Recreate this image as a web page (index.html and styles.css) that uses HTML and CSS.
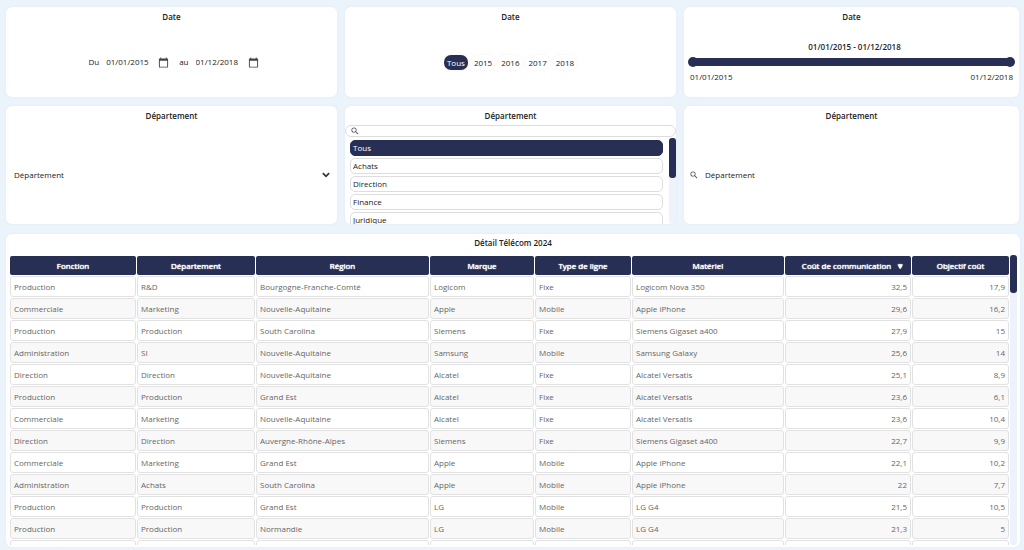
FILE: index.html
```html
<!DOCTYPE html>
<html lang="fr">
<head>
<meta charset="utf-8">
<title>Détail Télécom 2024</title>
<link rel="stylesheet" href="styles.css">
</head>
<body>
<svg class="sprite" aria-hidden="true">
  <symbol id="search" viewBox="2 2 20 20"><path fill="currentColor" d="M15.5 14h-.79l-.28-.27A6.47 6.47 0 0 0 16 9.5 6.5 6.5 0 1 0 9.5 16c1.61 0 3.09-.59 4.23-1.57l.27.28v.79l5 4.99L20.49 19l-4.99-5zm-6 0C7.01 14 5 11.99 5 9.5S7.01 5 9.5 5 14 7.01 14 9.5 11.99 14 9.5 14z"/></symbol>
  <symbol id="calendar" viewBox="0 0 24 24"><path fill="currentColor" d="M20 3h-1V1h-2v2H7V1H5v2H4c-1.100 0-2 .9-2 2v16c0 1.100.9 2 2 2h16c1.100 0 2-.9 2-2V5c0-1.100-.9-2-2-2zm0 18H4V8h16v13z"/></symbol>
</svg>
<main class="dashboard">
  <section class="filters">
    <article class="card">
      <h2 class="title">Date</h2>
      <div class="body period">
        <label for="from">Du</label>
        <input class="date" id="from" type="text" value="01/01/2015">
        <button class="icon-button" type="button" aria-label="Choisir la date de début"><svg class="cal"><use href="#calendar"/></svg></button>
        <label class="until" for="to">au</label>
        <input class="date" id="to" type="text" value="01/12/2018">
        <button class="icon-button" type="button" aria-label="Choisir la date de fin"><svg class="cal"><use href="#calendar"/></svg></button>
      </div>
    </article>
    <article class="card">
      <h2 class="title">Date</h2>
      <div class="body years">
        <button class="pill selected" type="button">Tous</button>
        <button class="pill" type="button">2015</button>
        <button class="pill" type="button">2016</button>
        <button class="pill" type="button">2017</button>
        <button class="pill" type="button">2018</button>
      </div>
    </article>
    <article class="card">
      <h2 class="title">Date</h2>
      <div class="body range">
        <strong class="range-value">01/01/2015 - 01/12/2018</strong>
        <div class="slider">
          <span class="track"></span>
          <input type="range" min="0" max="47" value="0" aria-label="Date de début">
          <input type="range" min="0" max="47" value="47" aria-label="Date de fin">
        </div>
        <div class="bounds"><span>01/01/2015</span><span>01/12/2018</span></div>
      </div>
    </article>
    <article class="card">
      <h2 class="title">Département</h2>
      <div class="body dropdown">
        <select class="select" aria-label="Département"><option>Département</option></select>
        <svg class="chevron" viewBox="0 0 8 8" aria-hidden="true"><path d="M1.500 2.500 4 5l2.500-2.500" fill="none" stroke="currentColor" stroke-width="1.400"/></svg>
      </div>
    </article>
    <article class="card">
      <h2 class="title">Département</h2>
      <div class="searchbar">
        <svg class="glass"><use href="#search"/></svg>
        <input class="field" type="text" aria-label="Rechercher un département">
      </div>
      <div class="list">
        <ul class="options">
          <li><button class="option selected" type="button">Tous</button></li>
          <li><button class="option" type="button">Achats</button></li>
          <li><button class="option" type="button">Direction</button></li>
          <li><button class="option" type="button">Finance</button></li>
          <li><button class="option" type="button">Juridique</button></li>
        </ul>
        <div class="scroll"><div class="thumb"></div></div>
      </div>
    </article>
    <article class="card">
      <h2 class="title">Département</h2>
      <div class="body lookup">
        <svg class="glass"><use href="#search"/></svg>
        <input class="field" type="text" placeholder="Département" aria-label="Département">
      </div>
    </article>
  </section>
  <section class="card details">
    <h2 class="title">Détail Télécom 2024</h2>
    <div class="viewport">
      <div class="table-clip">
      <table class="table">
        <colgroup><col class="c-function"><col class="c-department"><col class="c-region"><col class="c-brand"><col class="c-line"><col class="c-device"><col class="c-cost"><col class="c-target"></colgroup>
        <thead><tr><th>Fonction</th><th>Département</th><th>Région</th><th>Marque</th><th>Type de ligne</th><th>Matériel</th><th class="sorted">Coût de communication <span class="sort">▼</span></th><th>Objectif coût</th></tr></thead>
        <tbody>
          <tr><td>Production</td><td>R&amp;D</td><td>Bourgogne-Franche-Comté</td><td>Logicom</td><td>Fixe</td><td>Logicom Nova 350</td><td>32,5</td><td>17,9</td></tr>
          <tr><td>Commerciale</td><td>Marketing</td><td>Nouvelle-Aquitaine</td><td>Apple</td><td>Mobile</td><td>Apple iPhone</td><td>29,6</td><td>16,2</td></tr>
          <tr><td>Production</td><td>Production</td><td>South Carolina</td><td>Siemens</td><td>Fixe</td><td>Siemens Gigaset a400</td><td>27,9</td><td>15</td></tr>
          <tr><td>Administration</td><td>SI</td><td>Nouvelle-Aquitaine</td><td>Samsung</td><td>Mobile</td><td>Samsung Galaxy</td><td>25,6</td><td>14</td></tr>
          <tr><td>Direction</td><td>Direction</td><td>Nouvelle-Aquitaine</td><td>Alcatel</td><td>Fixe</td><td>Alcatel Versatis</td><td>25,1</td><td>8,9</td></tr>
          <tr><td>Production</td><td>Production</td><td>Grand Est</td><td>Alcatel</td><td>Fixe</td><td>Alcatel Versatis</td><td>23,6</td><td>6,1</td></tr>
          <tr><td>Commerciale</td><td>Marketing</td><td>Nouvelle-Aquitaine</td><td>Alcatel</td><td>Fixe</td><td>Alcatel Versatis</td><td>23,6</td><td>10,4</td></tr>
          <tr><td>Direction</td><td>Direction</td><td>Auvergne-Rhône-Alpes</td><td>Siemens</td><td>Fixe</td><td>Siemens Gigaset a400</td><td>22,7</td><td>9,9</td></tr>
          <tr><td>Commerciale</td><td>Marketing</td><td>Grand Est</td><td>Apple</td><td>Mobile</td><td>Apple iPhone</td><td>22,1</td><td>10,2</td></tr>
          <tr><td>Administration</td><td>Achats</td><td>South Carolina</td><td>Apple</td><td>Mobile</td><td>Apple iPhone</td><td>22</td><td>7,7</td></tr>
          <tr><td>Production</td><td>Production</td><td>Grand Est</td><td>LG</td><td>Mobile</td><td>LG G4</td><td>21,5</td><td>10,5</td></tr>
          <tr><td>Production</td><td>Production</td><td>Normandie</td><td>LG</td><td>Mobile</td><td>LG G4</td><td>21,3</td><td>5</td></tr>
          <tr><td></td><td></td><td></td><td></td><td></td><td></td><td></td><td></td></tr>
        </tbody>
      </table>
      </div>
      <div class="scroll"><div class="thumb"></div></div>
    </div>
  </section>
</main>
</body>
</html>
```

FILE: styles.css
```css
* { box-sizing: border-box; }

body {
  margin: 0;
  background: #ebf3fb;
  color: #222;
  font: 8px/12px "Open Sans", "Noto Sans", sans-serif;
}

button, input, select { font: inherit; color: inherit; border: 0; padding: 0; margin: 0; background: none; outline: 0; }
.sprite { display: none; }

.dashboard {
  height: 100vh;
  display: flex;
  flex-direction: column;
  gap: 10px;
  padding: 7px 4px 3px 6px;
}

.filters {
  display: grid;
  grid-template-columns: 331fr 331fr 335fr;
  grid-template-rows: 90px 118px;
  gap: 9px 8px;
  padding-right: 1px;
}

.card {
  display: flex;
  flex-direction: column;
  min-width: 0;
  min-height: 0;
  overflow: hidden;
  background: #fff;
  border-radius: 6px;
  box-shadow: 0 0 2px #e3e8ef;
}

.title {
  margin: 0;
  padding-top: 3px;
  font-size: 8px;
  line-height: 13px;
  font-weight: 600;
  text-align: center;
}

.body { flex: 1; display: flex; align-items: center; justify-content: center; padding-top: 4px; }

.period { padding-left: 4px; }
.date { width: 45px; margin: 0 7px; }
.until { margin-left: 10px; }
.icon-button { display: flex; }
.cal { width: 11px; height: 11px; color: #444; }

.years { gap: 3px; }
.pill { padding: 1px 3px; line-height: 13px; border-radius: 7px; box-shadow: 0 0 3px #f0f0f0; }
.selected { background: #272f54; color: #fff; }

.range { flex-direction: column; align-items: stretch; padding: 4px 4px 0; }
.range-value { padding-left: 6px; text-align: center; font-weight: 600; }
.slider { display: grid; align-items: center; margin: 4px 0; }
.slider > * { grid-area: 1 / 1; }
.track { height: 8px; margin: 0 4px; background: #272f54; }
.slider input { appearance: none; width: 100%; height: 10px; pointer-events: none; }
.slider input::-webkit-slider-thumb {
  appearance: none;
  width: 10px;
  height: 10px;
  border-radius: 50%;
  background: #272f54;
  pointer-events: auto;
}
.bounds { display: flex; justify-content: space-between; padding: 0 2px; }

.dropdown { padding: 4px 6px 0 8px; }
.select { flex: 1; appearance: none; }
.chevron { width: 10px; height: 10px; color: #333; }

.searchbar {
  display: flex;
  align-items: center;
  gap: 4px;
  height: 12px;
  margin-top: 3px;
  padding-left: 5px;
  border: 1px solid #ddd;
  border-radius: 6px;
  flex: none;
}
.field { flex: 1; min-width: 0; height: 12px; }
.searchbar .field { height: 10px; }
.field::placeholder { color: #222; opacity: 1; }
.glass { width: 8px; height: 8px; color: #555; flex: none; }
.lookup { gap: 7px; padding: 4px 6px 0; }

.list { flex: 1; min-height: 0; display: flex; gap: 6px; padding: 1px 0 0 5px; }
.options { flex: 1; min-height: 0; margin: 0; padding: 2px 0 0; list-style: none; overflow: hidden; }
.option {
  display: block;
  width: 100%;
  height: 16px;
  margin-bottom: 2px;
  padding: 0 2px;
  border: 1px solid #ddd;
  border-radius: 5px;
  text-align: left;
}
.option.selected { border-color: #272f54; }

.scroll { width: 7px; flex: none; background: #eef3fb; border-radius: 3px; }
.thumb { height: 40px; background: #272f54; border-radius: 3px; }

.details { flex: 1; }
.details .title { padding-top: 2px; line-height: 14px; }
.viewport { flex: 1; min-height: 0; display: flex; padding: 5px 3px 2px; }
.table-clip { flex: 1; min-width: 0; overflow: hidden; }
.details .thumb { height: 38px; }
.table { width: 100%; table-layout: fixed; border-collapse: separate; border-spacing: 1px; }
.c-function { width: 126px; }
.c-department { width: 118px; }
.c-region { width: 173px; }
.c-brand { width: 104px; }
.c-line { width: 96px; }
.c-device { width: 152px; }
.c-cost { width: 126px; }
.table th {
  height: 19px;
  padding: 0;
  background: #272f54;
  color: #fff;
  border-radius: 2px;
  font-weight: 400;
  text-shadow: 0 0 1px #fff, 0 0 1px #fff;
  white-space: nowrap;
}
.table .sorted { padding-left: 10px; }
.sort { margin-left: 3px; }
.table td {
  height: 21px;
  padding: 0 3px;
  border: 1px solid #e2e2e2;
  border-radius: 3px;
  color: #666;
}
.table tbody tr:nth-child(even) td { background: #f8f8f8; }
.table td:nth-child(n + 7) { text-align: right; }
```
